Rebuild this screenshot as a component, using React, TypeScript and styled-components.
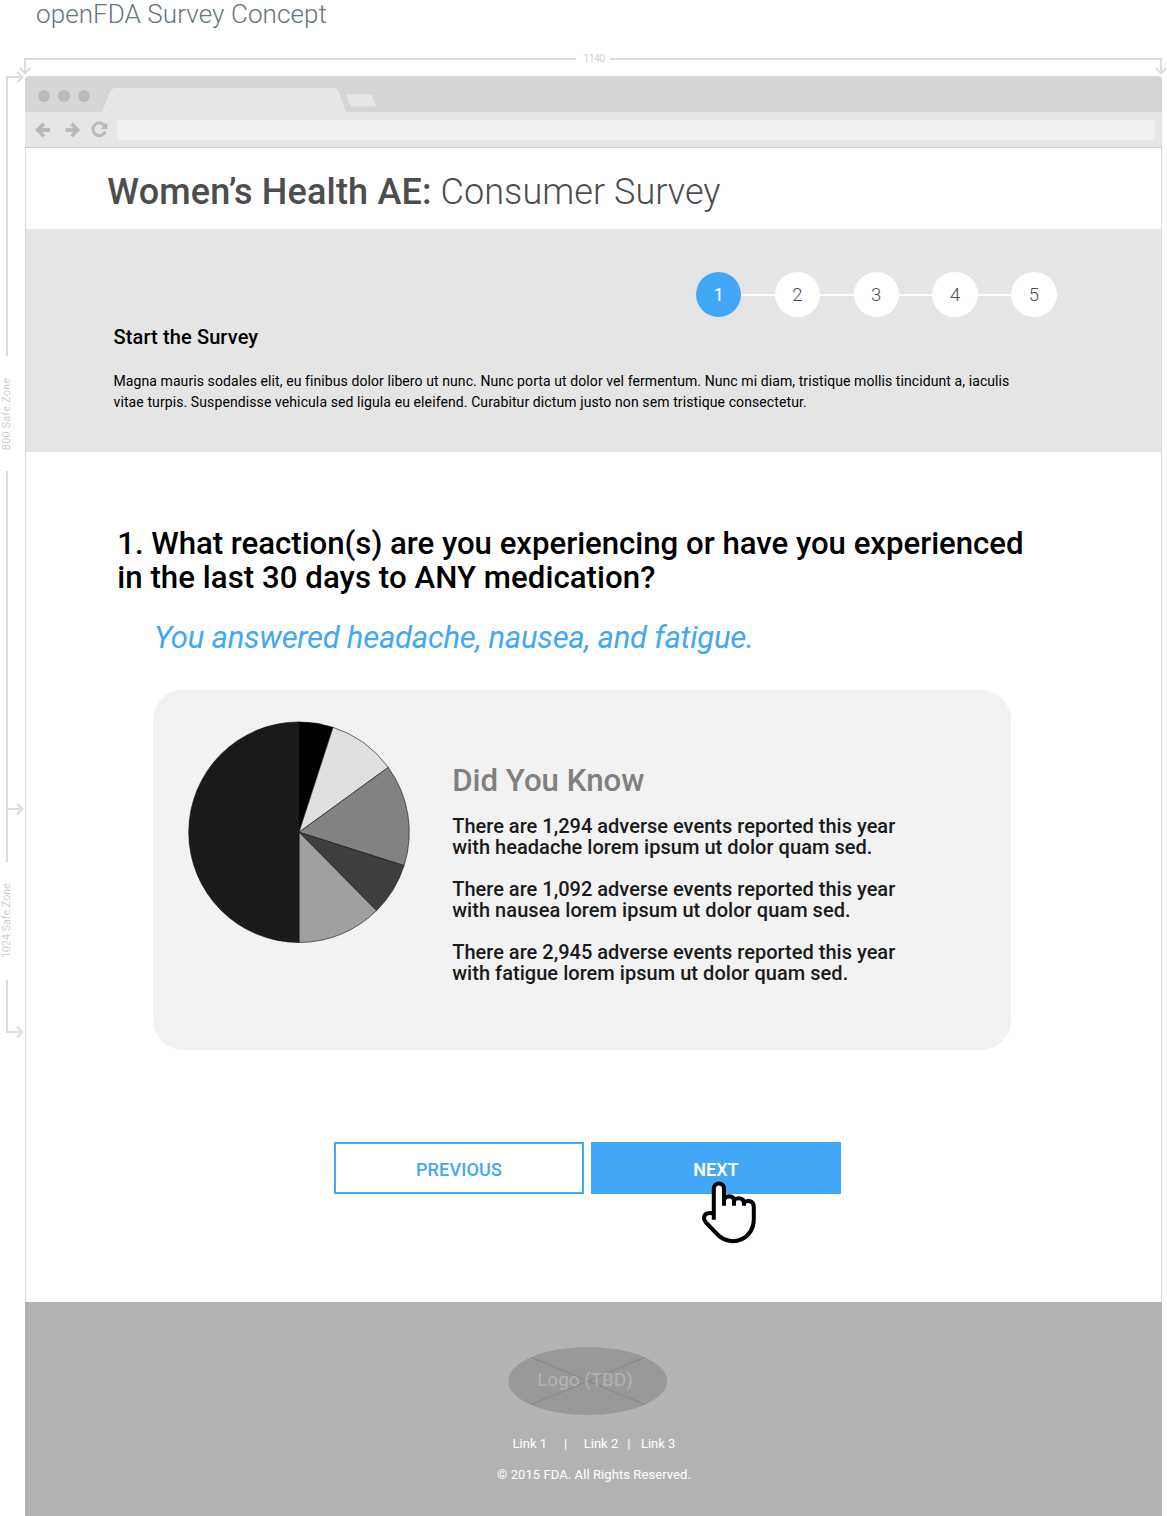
import React from "react";
import styled, { createGlobalStyle } from "styled-components";

const blue = "#40a8f6";
const rule = "#d9dddd";

const Global = createGlobalStyle`
  * { box-sizing: border-box; }
  html, body { margin: 0; padding: 0; background: #fff; }
  body { font-family: Roboto, "Liberation Sans", sans-serif; overflow: hidden; }
  p, h1, h2, h3 { margin: 0; font-weight: 400; }
`;

const Page = styled.div`
  width: 1167px;
  height: 1516px;
  display: flex;
  flex-direction: column;
  overflow: hidden;
`;

const Caption = styled.div`
  height: 58px;
  padding-left: 36px;
  font-size: 26px;
  line-height: 28px;
  font-weight: 300;
  letter-spacing: 0.08px;
  color: #65767a;
  white-space: nowrap;
`;

const TopRuler = styled.div`
  display: flex;
  height: 18px;
  padding-left: 24px;
`;

const HLine = styled.div<{ $w: number; $side: "left" | "right" }>`
  position: relative;
  width: ${(p) => p.$w}px;
  height: 14px;
  border-top: 2px solid ${rule};
  border-${(p) => p.$side}: 2px solid ${rule};
`;

const RulerLabel = styled.div<{ $w: number }>`
  width: ${(p) => p.$w}px;
  margin-top: -6px;
  padding-left: 2px;
  text-align: center;
  font-size: 10.5px;
  line-height: 14px;
  font-weight: 300;
  letter-spacing: -0.6px;
  color: #b4b9b9;
`;

const Head = styled.svg<{ $x: number; $y: number }>`
  position: absolute;
  left: ${(p) => p.$x}px;
  top: ${(p) => p.$y}px;
  fill: none;
  stroke: ${rule};
  stroke-width: 2;
  overflow: visible;
`;

const Body = styled.div`
  display: flex;
  flex: 1;
`;

const LeftRuler = styled.div`
  width: 25px;
  display: flex;
  flex-direction: column;
`;

const VLine = styled.div<{ $h: number; $cap?: "top" | "bottom" }>`
  position: relative;
  margin-left: 6px;
  width: 14px;
  height: ${(p) => p.$h}px;
  border-left: 2px solid ${rule};
  ${(p) => (p.$cap ? `border-${p.$cap}: 2px solid ${rule};` : "")}
`;

const Branch = styled.div`
  margin-top: 337px;
  height: 2px;
  background: ${rule};
`;

const VLabel = styled.div<{ $h: number; $ls: number }>`
  height: ${(p) => p.$h}px;
  width: 13px;
  display: flex;
  justify-content: center;
  writing-mode: vertical-rl;
  transform: rotate(180deg);
  font-size: 10.5px;
  line-height: 13px;
  font-weight: 300;
  letter-spacing: ${(p) => p.$ls}px;
  color: #b4b9b9;
  white-space: nowrap;
`;

const Browser = styled.div`
  width: 1137px;
  display: flex;
  flex-direction: column;
`;

const TabStrip = styled.div`
  height: 36px;
  display: flex;
  align-items: flex-start;
  background: #d6d6d6;
  border-radius: 4px 4px 0 0;
`;

const Dots = styled.div`
  display: flex;
  gap: 8px;
  padding: 13.5px 0 0 13px;
`;

const Dot = styled.span`
  width: 12px;
  height: 12px;
  border-radius: 50%;
  background: #bababa;
`;

const Tabs = styled.svg`
  margin-left: 10px;
`;

const Toolbar = styled.div`
  height: 36px;
  display: flex;
  align-items: center;
  background: #e6e6e6;
  border-bottom: 1px solid #cfd0d0;
  padding-right: 7px;
`;

const NavIcons = styled.svg`
  flex: none;
  width: 92px;
  height: 35px;
`;

const Address = styled.div`
  flex: 1;
  height: 20px;
  border-radius: 3px;
  background: #f0f0f0;
`;

const Viewport = styled.div`
  flex: 1;
  display: flex;
  flex-direction: column;
`;

const Framed = styled.div`
  border-left: 1px solid #d8d9d9;
  border-right: 1px solid #d8d9d9;
  height: 1154px;
`;

const TitleBar = styled.h1`
  height: 81px;
  padding: 24px 0 0 81.3px;
  font-size: 36px;
  line-height: 40px;
  font-weight: 300;
  letter-spacing: 0.07px;
  color: #4d4d4d;
  white-space: nowrap;
`;

const Strong = styled.span`
  font-weight: 500;
  letter-spacing: 0.18px;
`;

const Intro = styled.section`
  height: 223px;
  padding: 43px 104.500px 0 87.5px;
  background: #e5e5e5;
`;

const Steps = styled.div`
  display: flex;
  align-items: center;
  justify-content: flex-end;
`;

const Step = styled.div<{ $active?: boolean }>`
  width: 45.4px;
  height: 45.4px;
  border-radius: 50%;
  display: flex;
  align-items: center;
  justify-content: center;
  padding-top: 1px;
  font-size: 18.5px;
  font-weight: ${(p) => (p.$active ? 400 : 300)};
  background: ${(p) => (p.$active ? blue : "#fff")};
  color: ${(p) => (p.$active ? "#fff" : "#4d4d4d")};
`;

const Link = styled.div`
  width: 33.4px;
  height: 2px;
  background: #fff;
`;

const IntroTitle = styled.h2`
  margin-top: 7px;
  font-size: 20px;
  line-height: 26px;
  font-weight: 500;
  letter-spacing: 0.12px;
  color: #000;
`;

const IntroText = styled.p`
  margin-top: 21px;
  font-size: 14px;
  line-height: 21px;
  color: #000;
  white-space: nowrap;
`;

const Line = styled.span<{ $ls?: number }>`
  display: block;
  white-space: nowrap;
  letter-spacing: ${(p) => p.$ls ?? 0}px;
`;

const Question = styled.h2`
  margin: 75px 0 0 91.2px;
  font-size: 31.2px;
  line-height: 34px;
  font-weight: 500;
  color: #000;
`;

const Answer = styled.p`
  margin: 23px 0 0 128px;
  font-size: 31px;
  line-height: 40px;
  font-style: italic;
  letter-spacing: -0.23px;
  color: ${blue};
`;

const Card = styled.section`
  margin: 32px 0 0 127px;
  width: 858px;
  height: 360px;
  border-radius: 30px;
  background: #f2f2f2;
  display: flex;
  padding: 32px 0 0 35px;
`;

const Facts = styled.div`
  margin: 41px 0 0 42.2px;
`;

const FactsTitle = styled.h3`
  font-size: 31.2px;
  line-height: 36px;
  font-weight: 500;
  color: #808080;
`;

const Fact = styled.p<{ $first?: boolean }>`
  margin-top: ${(p) => (p.$first ? 17 : 21)}px;
  font-size: 20px;
  line-height: 21px;
  font-weight: 500;
  color: #1a1a1a;
`;

const Actions = styled.div`
  display: flex;
  gap: 7px;
  margin: 92px 0 0 308px;
`;

const Button = styled.button<{ $primary?: boolean }>`
  position: relative;
  width: 250px;
  height: 52px;
  padding: 3px 0 0;
  border: 2px solid ${blue};
  background: ${(p) => (p.$primary ? blue : "#fff")};
  color: ${(p) => (p.$primary ? "#fff" : blue)};
  font-family: inherit;
  font-size: 18px;
  font-weight: ${(p) => (p.$primary ? 600 : 500)};
  letter-spacing: ${(p) => (p.$primary ? 0 : 0.16)}px;
`;

const Pointer = styled.svg`
  position: absolute;
  left: 107.500px;
  top: 35.500px;
  overflow: visible;
`;

const Footer = styled.footer`
  flex: 1;
  display: flex;
  flex-direction: column;
  align-items: center;
  background: #b3b3b3;
  padding-top: 45px;
  color: #fff;
  font-size: 13px;
`;

const Logo = styled.div`
  position: relative;
  width: 160px;
  height: 68px;
  margin-right: 12px;
  display: flex;
  align-items: center;
  justify-content: center;
  padding: 0 5px 3px 0;
  font-size: 19px;
  letter-spacing: -0.04px;
  color: #b3b3b3;
`;

const LogoShape = styled.svg`
  position: absolute;
  inset: 0;
`;

const LogoText = styled.span`
  position: relative;
`;

const FooterLinks = styled.nav`
  display: flex;
  margin: 20px 0 0 1px;
  line-height: 18px;
`;

const FooterItem = styled.span<{ $gap?: number }>`
  margin-left: ${(p) => p.$gap ?? 0}px;
`;

const Copyright = styled.p`
  margin: 13px 0 0 1px;
  line-height: 18px;
  letter-spacing: 0.08px;
`;

const slices = [
  { from: 0, to: 0.05, fill: "#000000" },
  { from: 0.05, to: 0.15, fill: "#e0e0e0" },
  { from: 0.15, to: 0.299, fill: "#828282" },
  { from: 0.299, to: 0.376, fill: "#3e3e3e" },
  { from: 0.376, to: 0.5, fill: "#a0a0a0" },
  { from: 0.5, to: 1, fill: "#1a1a1a" },
];

const point = (t: number) => {
  const a = t * Math.PI * 2;
  return `${(111 + 110.3 * Math.sin(a)).toFixed(2)} ${(110.2 - 110.3 * Math.cos(a)).toFixed(2)}`;
};

const Pie = () => (
  <svg width="222" height="222" viewBox="0 0 222 222" overflow="visible">
    {slices.map((s) => (
      <path
        key={s.from}
        d={`M111 110.2 L${point(s.from)} A110.3 110.3 0 0 1 ${point(s.to)} Z`}
        fill={s.fill}
        stroke="#111"
        strokeWidth="0.6"
      />
    ))}
  </svg>
);

const DownHead = ({ x }: { x: number }) => (
  <Head $x={x} $y={7} width="12" height="7">
    <path d="M0.8 1 L6 6.4 L11.2 1" />
  </Head>
);

const RightHead = ({ y }: { y: number }) => (
  <Head $x={8} $y={y} width="7" height="12">
    <path d="M1 0.8 L6.4 6 L1 11.2" />
  </Head>
);

export default function App() {
  return (
    <>
      <Global />
      <Page>
        <Caption>openFDA Survey Concept</Caption>
        <TopRuler>
          <HLine $w={552} $side="left">
            <DownHead x={-7} />
          </HLine>
          <RulerLabel $w={34}>1140</RulerLabel>
          <HLine $w={552} $side="right">
            <DownHead x={545} />
          </HLine>
        </TopRuler>
        <Body>
          <LeftRuler>
            <VLine $h={280} $cap="top">
              <RightHead y={-7} />
            </VLine>
            <VLabel $h={115} $ls={0.45}>800 Safe Zone</VLabel>
            <VLine $h={391}>
              <Branch />
              <RightHead y={332} />
            </VLine>
            <VLabel $h={118} $ls={0.18}>1024 Safe Zone</VLabel>
            <VLine $h={53} $cap="bottom">
              <RightHead y={46} />
            </VLine>
          </LeftRuler>
          <Browser>
            <TabStrip>
              <Dots>
                <Dot />
                <Dot />
                <Dot />
              </Dots>
              <Tabs width="280" height="36">
                <path d="M2 36 L10 16 Q12 12 16 12 L232 12 Q237 12 239 16 L246 36 Z" fill="#e6e6e6" />
                <path d="M246 18 L269 18 Q271 18 272 20 L276 30.5 L252 30.5 Q251 30.5 250 28.5 Z" fill="#e6e6e6" />
              </Tabs>
            </TabStrip>
            <Toolbar>
              <NavIcons>
                <g fill="none" stroke="#b8b9b9" strokeWidth="3.8">
                  <path d="M25 18 H13 M18.8 11.8 L12.8 18 L18.8 24.2" />
                  <path d="M40.500 18 H52.5 M46.500 11.8 L52.5 18 L46.5 24.200" />
                  <path d="M79.600 13.900 A6.300 6.300 0 1 0 80.200 19.500" strokeWidth="3" />
                </g>
                <path d="M82.300 10.500 V17 H75.800 Z" fill="#b8b9b9" />
              </NavIcons>
              <Address />
            </Toolbar>
            <Viewport>
              <Framed>
                <TitleBar>
                  <Strong>Women’s Health AE:</Strong> Consumer Survey
                </TitleBar>
                <Intro>
                  <Steps>
                    <Step $active>1</Step>
                    {[2, 3, 4, 5].map((n) => (
                      <React.Fragment key={n}>
                        <Link />
                        <Step>{n}</Step>
                      </React.Fragment>
                    ))}
                  </Steps>
                  <IntroTitle>Start the Survey</IntroTitle>
                  <IntroText>
                    <Line $ls={0.088}>
                      Magna mauris sodales elit, eu finibus dolor libero ut nunc. Nunc porta ut dolor vel fermentum. Nunc mi diam, tristique mollis tincidunt a, iaculis
                    </Line>
                    <Line $ls={0.1}>
                      vitae turpis. Suspendisse vehicula sed ligula eu eleifend. Curabitur dictum justo non sem tristique consectetur.
                    </Line>
                  </IntroText>
                </Intro>
                <Question>
                  <Line $ls={-0.025}>1. What reaction(s) are you experiencing or have you experienced</Line>
                  <Line $ls={0.05}>in the last 30 days to ANY medication?</Line>
                </Question>
                <Answer>You answered headache, nausea, and fatigue.</Answer>
                <Card>
                  <Pie />
                  <Facts>
                    <FactsTitle>Did You Know</FactsTitle>
                    <Fact $first>
                      <Line $ls={0.015}>There are 1,294 adverse events reported this year</Line>
                      <Line $ls={0.04}>with headache lorem ipsum ut dolor quam sed.</Line>
                    </Fact>
                    <Fact>
                      <Line $ls={0.015}>There are 1,092 adverse events reported this year</Line>
                      <Line $ls={0.05}>with nausea lorem ipsum ut dolor quam sed.</Line>
                    </Fact>
                    <Fact>
                      <Line $ls={0.015}>There are 2,945 adverse events reported this year</Line>
                      <Line $ls={0.04}>with fatigue lorem ipsum ut dolor quam sed.</Line>
                    </Fact>
                  </Facts>
                </Card>
                <Actions>
                  <Button>PREVIOUS</Button>
                  <Button $primary>
                    NEXT
                    <Pointer width="56" height="64">
                      <path
                        d="M12.800 39 V8.500 A5.100 5.100 0 0 1 23 8.500 V18 Q28 14 33 18.500 Q38.500 15.500 43 21.500 Q52.800 19.500 52.800 26 V41 A21 21 0 0 1 17.500 56 L4.800 42.500 Q2 39.500 3.500 35.500 Q6 31.500 12.800 33 Z"
                        fill="#fff"
                      />
                      <g fill="none" stroke="#000" strokeWidth="4">
                        <path d="M12.800 39.800 V8.500 A5.100 5.100 0 0 1 23 8.500 V25.800" />
                        <path d="M23 19.500 Q25 16.300 28.500 16.300 Q33 16.500 33 21 V25.800" />
                        <path d="M33 20.500 Q35 18 38 18.300 Q43 18.700 43 23.500 V25.800" />
                        <path d="M43 23 Q44.500 20.800 48 20.900 Q52.800 21.500 52.800 27 V40 A21 21 0 0 1 17.500 55.500 L4.800 42.300 Q2 39 3.500 35.500 Q6 32 12.800 33.500" />
                      </g>
                    </Pointer>
                  </Button>
                </Actions>
              </Framed>
              <Footer>
                <Logo>
                  <LogoShape width="160" height="68">
                    <ellipse cx="79.700" cy="34" rx="79.500" ry="34" fill="#999" />
                    <path d="M23.500 10.500 L136.500 57.500 M136.500 10.500 L23.500 57.500" stroke="#858585" strokeWidth="1" />
                  </LogoShape>
                  <LogoText>Logo (TBD)</LogoText>
                </Logo>
                <FooterLinks>
                  <FooterItem>Link 1</FooterItem>
                  <FooterItem $gap={17}>|</FooterItem>
                  <FooterItem $gap={16.5}>Link 2</FooterItem>
                  <FooterItem $gap={9}>|</FooterItem>
                  <FooterItem $gap={10.5}>Link 3</FooterItem>
                </FooterLinks>
                <Copyright>© 2015 FDA. All Rights Reserved.</Copyright>
              </Footer>
            </Viewport>
          </Browser>
        </Body>
      </Page>
    </>
  );
}
